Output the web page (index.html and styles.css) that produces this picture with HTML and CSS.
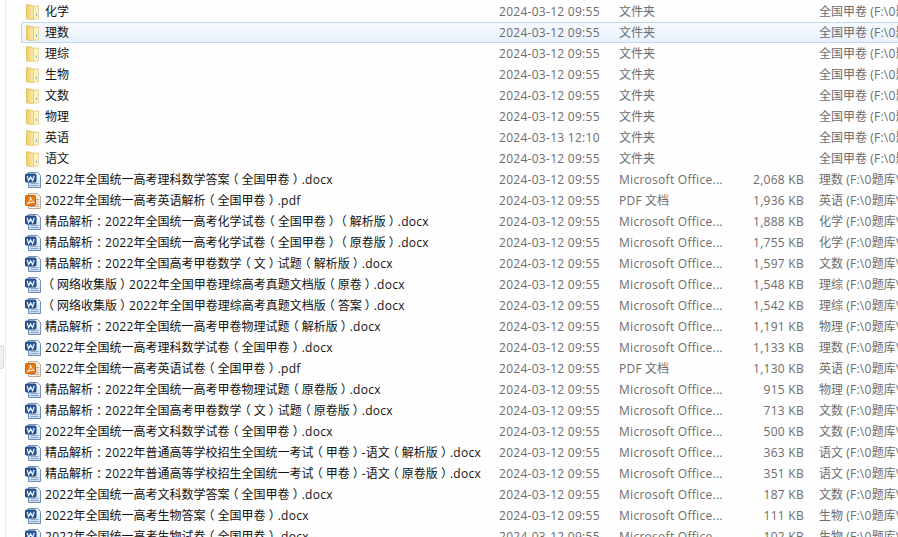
FILE: index.html
```html
<!DOCTYPE html>
<html lang="zh">
<head>
<meta charset="utf-8">
<title>全国甲卷</title>
<link rel="stylesheet" href="styles.css">
</head>
<body>
<svg class="defs" width="0" height="0" aria-hidden="true">
<defs>
<linearGradient id="fg" x1="0" y1="0" x2="1" y2="0"><stop offset="0" stop-color="#f0cc68"/><stop offset="1" stop-color="#fceca8"/></linearGradient>
<linearGradient id="wg" x1="0" y1="0" x2="0" y2="1"><stop offset="0" stop-color="#fff"/><stop offset="1" stop-color="#c9d8ec"/></linearGradient>
<symbol id="folder" viewBox="0 0 16 16">
<path d="M1.500 1h4.500l1 1h6.500V15H1.500z" fill="#f9e59c" stroke="#e6cc7c" stroke-width=".7"/>
<path d="M8.500 3h4.500v11.500h-4.500z" fill="#fdf3c4"/>
<path d="M1.500 .5 8.500 2.500V16L1.500 14.500z" fill="url(#fg)" stroke="#dcbb5c" stroke-width=".6"/>
<path d="M11.500 9.500v2.500" stroke="#7fadd6"/>
</symbol>
<symbol id="word" viewBox="0 0 16 16">
<path d="M3.500.5h9l3 3v12h-12z" fill="url(#wg)" stroke="#6f8fb8"/>
<path d="M5.500 11.500h8M5.500 13.500h8" stroke="#8aa8cc"/>
<rect x=".5" y="2" width="10.500" height="8" rx="1" fill="#2a5a9c" stroke="#1e4880"/>
<path d="M2.200 3.800 3.600 8.600 5.600 5 7.600 8.600 9.200 3.800" fill="none" stroke="#fff" stroke-width="1.100"/>
</symbol>
<symbol id="pdf" viewBox="0 0 16 16">
<path d="M3.500.5h9l3 3v12h-12z" fill="#f5efe4" stroke="#bfae94"/>
<path d="M11 6.500h3M11 9h3M11 11.500h3M5 13.500h9" stroke="#b8b0a0"/>
<rect x=".5" y="2.500" width="10" height="10" rx="1" fill="#e8791a" stroke="#c85f10"/>
<path d="M2 11C4.500 9 5.800 6.500 5.400 4 6.300 7 7.300 9 9.400 9.400 6.800 9.200 4.500 9.500 2 11z" fill="none" stroke="#fff" stroke-width=".9"/>
</symbol>
</defs>
</svg>
<div class="handle"></div>
<main class="list">
<div class="row"><svg class="ic"><use href="#folder"/></svg><span class="name">化学</span><span class="date">2024-03-12 09:55</span><span class="type">文件夹</span><span class="size"></span><span class="path">全国甲卷 <span class="l">(F:\0</span>题库\</span></div>
<div class="row sel"><svg class="ic"><use href="#folder"/></svg><span class="name">理数</span><span class="date">2024-03-12 09:55</span><span class="type">文件夹</span><span class="size"></span><span class="path">全国甲卷 <span class="l">(F:\0</span>题库\</span></div>
<div class="row"><svg class="ic"><use href="#folder"/></svg><span class="name">理综</span><span class="date">2024-03-12 09:55</span><span class="type">文件夹</span><span class="size"></span><span class="path">全国甲卷 <span class="l">(F:\0</span>题库\</span></div>
<div class="row"><svg class="ic"><use href="#folder"/></svg><span class="name">生物</span><span class="date">2024-03-12 09:55</span><span class="type">文件夹</span><span class="size"></span><span class="path">全国甲卷 <span class="l">(F:\0</span>题库\</span></div>
<div class="row"><svg class="ic"><use href="#folder"/></svg><span class="name">文数</span><span class="date">2024-03-12 09:55</span><span class="type">文件夹</span><span class="size"></span><span class="path">全国甲卷 <span class="l">(F:\0</span>题库\</span></div>
<div class="row"><svg class="ic"><use href="#folder"/></svg><span class="name">物理</span><span class="date">2024-03-12 09:55</span><span class="type">文件夹</span><span class="size"></span><span class="path">全国甲卷 <span class="l">(F:\0</span>题库\</span></div>
<div class="row"><svg class="ic"><use href="#folder"/></svg><span class="name">英语</span><span class="date">2024-03-13 12:10</span><span class="type">文件夹</span><span class="size"></span><span class="path">全国甲卷 <span class="l">(F:\0</span>题库\</span></div>
<div class="row"><svg class="ic"><use href="#folder"/></svg><span class="name">语文</span><span class="date">2024-03-12 09:55</span><span class="type">文件夹</span><span class="size"></span><span class="path">全国甲卷 <span class="l">(F:\0</span>题库\</span></div>
<div class="row"><svg class="ic"><use href="#word"/></svg><span class="name"><span class="l">2022</span>年全国统一高考理科数学答案<span class="p">（</span>全国甲卷<span class="p">）</span><span class="l">.docx</span></span><span class="date">2024-03-12 09:55</span><span class="type l">Microsoft Office...</span><span class="size">2,068 KB</span><span class="path">理数 <span class="l">(F:\0</span>题库\</span></div>
<div class="row"><svg class="ic"><use href="#pdf"/></svg><span class="name"><span class="l">2022</span>年全国统一高考英语解析<span class="p">（</span>全国甲卷<span class="p">）</span><span class="l">.pdf</span></span><span class="date">2024-03-12 09:55</span><span class="type"><span class="l">PDF</span> 文档</span><span class="size">1,936 KB</span><span class="path">英语 <span class="l">(F:\0</span>题库\</span></div>
<div class="row"><svg class="ic"><use href="#word"/></svg><span class="name">精品解析<span class="p">：</span><span class="l">2022</span>年全国统一高考化学试卷<span class="p">（</span>全国甲卷<span class="p">）</span><span class="p">（</span>解析版<span class="p">）</span><span class="l">.docx</span></span><span class="date">2024-03-12 09:55</span><span class="type l">Microsoft Office...</span><span class="size">1,888 KB</span><span class="path">化学 <span class="l">(F:\0</span>题库\</span></div>
<div class="row"><svg class="ic"><use href="#word"/></svg><span class="name">精品解析<span class="p">：</span><span class="l">2022</span>年全国统一高考化学试卷<span class="p">（</span>全国甲卷<span class="p">）</span><span class="p">（</span>原卷版<span class="p">）</span><span class="l">.docx</span></span><span class="date">2024-03-12 09:55</span><span class="type l">Microsoft Office...</span><span class="size">1,755 KB</span><span class="path">化学 <span class="l">(F:\0</span>题库\</span></div>
<div class="row"><svg class="ic"><use href="#word"/></svg><span class="name">精品解析<span class="p">：</span><span class="l">2022</span>年全国高考甲卷数学<span class="p">（</span>文<span class="p">）</span>试题<span class="p">（</span>解析版<span class="p">）</span><span class="l">.docx</span></span><span class="date">2024-03-12 09:55</span><span class="type l">Microsoft Office...</span><span class="size">1,597 KB</span><span class="path">文数 <span class="l">(F:\0</span>题库\</span></div>
<div class="row"><svg class="ic"><use href="#word"/></svg><span class="name"><span class="p">（</span>网络收集版<span class="p">）</span><span class="l">2022</span>年全国甲卷理综高考真题文档版<span class="p">（</span>原卷<span class="p">）</span><span class="l">.docx</span></span><span class="date">2024-03-12 09:55</span><span class="type l">Microsoft Office...</span><span class="size">1,548 KB</span><span class="path">理综 <span class="l">(F:\0</span>题库\</span></div>
<div class="row"><svg class="ic"><use href="#word"/></svg><span class="name"><span class="p">（</span>网络收集版<span class="p">）</span><span class="l">2022</span>年全国甲卷理综高考真题文档版<span class="p">（</span>答案<span class="p">）</span><span class="l">.docx</span></span><span class="date">2024-03-12 09:55</span><span class="type l">Microsoft Office...</span><span class="size">1,542 KB</span><span class="path">理综 <span class="l">(F:\0</span>题库\</span></div>
<div class="row"><svg class="ic"><use href="#word"/></svg><span class="name">精品解析<span class="p">：</span><span class="l">2022</span>年全国统一高考甲卷物理试题<span class="p">（</span>解析版<span class="p">）</span><span class="l">.docx</span></span><span class="date">2024-03-12 09:55</span><span class="type l">Microsoft Office...</span><span class="size">1,191 KB</span><span class="path">物理 <span class="l">(F:\0</span>题库\</span></div>
<div class="row"><svg class="ic"><use href="#word"/></svg><span class="name"><span class="l">2022</span>年全国统一高考理科数学试卷<span class="p">（</span>全国甲卷<span class="p">）</span><span class="l">.docx</span></span><span class="date">2024-03-12 09:55</span><span class="type l">Microsoft Office...</span><span class="size">1,133 KB</span><span class="path">理数 <span class="l">(F:\0</span>题库\</span></div>
<div class="row"><svg class="ic"><use href="#pdf"/></svg><span class="name"><span class="l">2022</span>年全国统一高考英语试卷<span class="p">（</span>全国甲卷<span class="p">）</span><span class="l">.pdf</span></span><span class="date">2024-03-12 09:55</span><span class="type"><span class="l">PDF</span> 文档</span><span class="size">1,130 KB</span><span class="path">英语 <span class="l">(F:\0</span>题库\</span></div>
<div class="row"><svg class="ic"><use href="#word"/></svg><span class="name">精品解析<span class="p">：</span><span class="l">2022</span>年全国统一高考甲卷物理试题<span class="p">（</span>原卷版<span class="p">）</span><span class="l">.docx</span></span><span class="date">2024-03-12 09:55</span><span class="type l">Microsoft Office...</span><span class="size">915 KB</span><span class="path">物理 <span class="l">(F:\0</span>题库\</span></div>
<div class="row"><svg class="ic"><use href="#word"/></svg><span class="name">精品解析<span class="p">：</span><span class="l">2022</span>年全国高考甲卷数学<span class="p">（</span>文<span class="p">）</span>试题<span class="p">（</span>原卷版<span class="p">）</span><span class="l">.docx</span></span><span class="date">2024-03-12 09:55</span><span class="type l">Microsoft Office...</span><span class="size">713 KB</span><span class="path">文数 <span class="l">(F:\0</span>题库\</span></div>
<div class="row"><svg class="ic"><use href="#word"/></svg><span class="name"><span class="l">2022</span>年全国统一高考文科数学试卷<span class="p">（</span>全国甲卷<span class="p">）</span><span class="l">.docx</span></span><span class="date">2024-03-12 09:55</span><span class="type l">Microsoft Office...</span><span class="size">500 KB</span><span class="path">文数 <span class="l">(F:\0</span>题库\</span></div>
<div class="row"><svg class="ic"><use href="#word"/></svg><span class="name">精品解析<span class="p">：</span><span class="l">2022</span>年普通高等学校招生全国统一考试<span class="p">（</span>甲卷<span class="p">）</span><span class="l">-</span>语文<span class="p">（</span>解析版<span class="p">）</span><span class="l">.docx</span></span><span class="date">2024-03-12 09:55</span><span class="type l">Microsoft Office...</span><span class="size">363 KB</span><span class="path">语文 <span class="l">(F:\0</span>题库\</span></div>
<div class="row"><svg class="ic"><use href="#word"/></svg><span class="name">精品解析<span class="p">：</span><span class="l">2022</span>年普通高等学校招生全国统一考试<span class="p">（</span>甲卷<span class="p">）</span><span class="l">-</span>语文<span class="p">（</span>原卷版<span class="p">）</span><span class="l">.docx</span></span><span class="date">2024-03-12 09:55</span><span class="type l">Microsoft Office...</span><span class="size">351 KB</span><span class="path">语文 <span class="l">(F:\0</span>题库\</span></div>
<div class="row"><svg class="ic"><use href="#word"/></svg><span class="name"><span class="l">2022</span>年全国统一高考文科数学答案<span class="p">（</span>全国甲卷<span class="p">）</span><span class="l">.docx</span></span><span class="date">2024-03-12 09:55</span><span class="type l">Microsoft Office...</span><span class="size">187 KB</span><span class="path">文数 <span class="l">(F:\0</span>题库\</span></div>
<div class="row"><svg class="ic"><use href="#word"/></svg><span class="name"><span class="l">2022</span>年全国统一高考生物答案<span class="p">（</span>全国甲卷<span class="p">）</span><span class="l">.docx</span></span><span class="date">2024-03-12 09:55</span><span class="type l">Microsoft Office...</span><span class="size">111 KB</span><span class="path">生物 <span class="l">(F:\0</span>题库\</span></div>
<div class="row"><svg class="ic"><use href="#word"/></svg><span class="name"><span class="l">2022</span>年全国统一高考生物试卷<span class="p">（</span>全国甲卷<span class="p">）</span><span class="l">.docx</span></span><span class="date">2024-03-12 09:55</span><span class="type l">Microsoft Office...</span><span class="size">102 KB</span><span class="path">生物 <span class="l">(F:\0</span>题库\</span></div>
</main>
</body>
</html>
```
FILE: styles.css
```css
html, body {
  margin: 0;
  height: 100%;
  overflow: hidden;
  background: #fff;
}
body {
  display: flex;
  font-family: "Open Sans", "Noto Sans CJK SC", sans-serif;
  font-size: 12px;
  color: #111;
}
.defs { position: absolute; }
.handle {
  position: absolute;
  left: 0;
  top: 345px;
  width: 3px;
  height: 22px;
  background: #f0f0f0;
  border: 1px solid #dcdcdc;
  border-left: 0;
  border-radius: 0 3px 3px 0;
}
.list {
  margin-left: 5px;
  padding-top: 1px;
  flex: 1;
  min-width: 0;
  border-left: 1px solid #e4ecf4;
  background: #fefefe;
}
.row {
  display: flex;
  align-items: center;
  height: 21px;
  margin-left: 15px;
  box-sizing: border-box;
  white-space: nowrap;
}
.row.sel {
  border: 1px solid #bcd8f6;
  border-right: 0;
  border-radius: 2px 0 0 2px;
  background: linear-gradient(#f6faff, #e8f2fd);
}
.ic { width: 16px; height: 16px; margin-left: 4px; flex: none; }
.sel .ic { margin-left: 3px; }
.name { width: 454px; margin-left: 4px; flex: none; line-height: 19px; height: 19px; }
.l { letter-spacing: .28px; }
.p { font-feature-settings: "halt"; padding: 0 3px; }
.date, .type, .size, .path { line-height: 19px; height: 19px; color: #6d6d6d; flex: none; }
.date { width: 120px; letter-spacing: .28px; }
.type { width: 110px; }
.size { width: 75px; text-align: right; letter-spacing: .28px; }
.path { margin-left: 15px; }
```
